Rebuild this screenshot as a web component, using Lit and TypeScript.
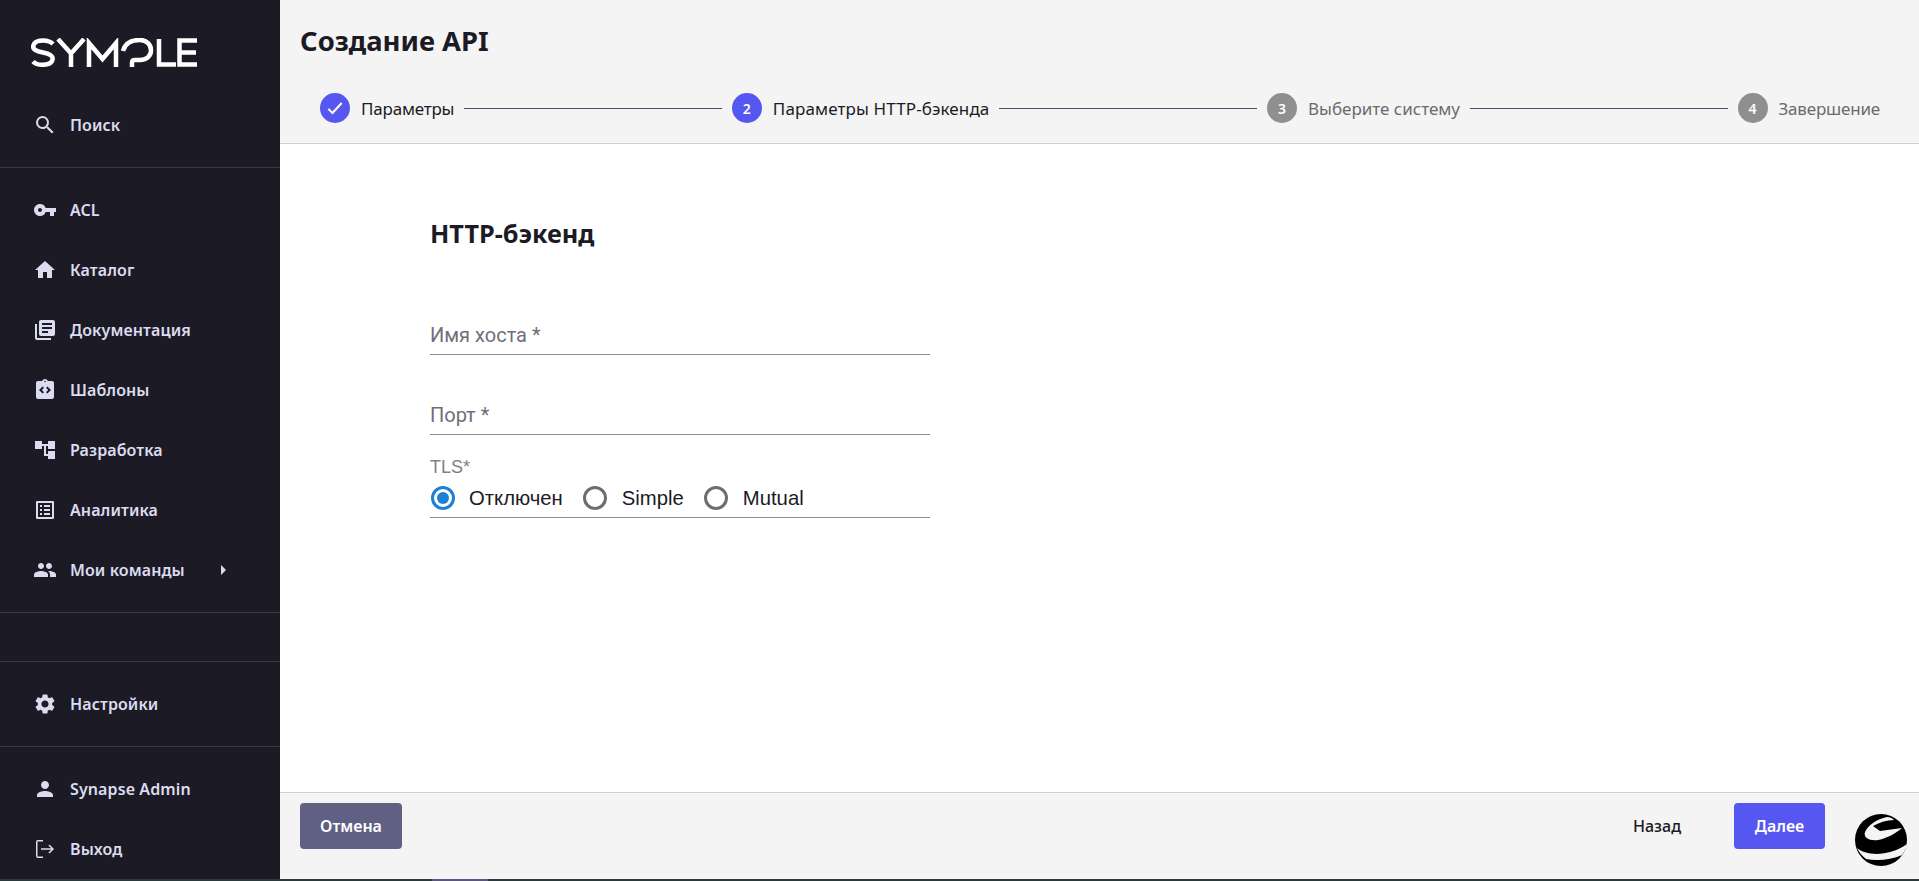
import { LitElement, html, css, svg } from "lit";
import { customElement } from "lit/decorators.js";

const icons: Record<string, any> = {
  search: svg`<path d="M15.5 14h-.79l-.28-.27A6.47 6.47 0 0 0 16 9.5 6.5 6.5 0 1 0 9.5 16c1.61 0 3.09-.59 4.23-1.57l.27.28v.79l5 4.99L20.49 19l-4.99-5zm-6 0C7.01 14 5 11.99 5 9.5S7.01 5 9.5 5 14 7.01 14 9.5 11.99 14 9.5 14z"/>`,
  key: svg`<path d="M12.65 10A6 6 0 0 0 7 6c-3.31 0-6 2.69-6 6s2.69 6 6 6a6 6 0 0 0 5.65-4H17v4h4v-4h2v-4H12.65zM7 14c-1.1 0-2-.9-2-2s.9-2 2-2 2 .9 2 2-.9 2-2 2z"/>`,
  home: svg`<path d="M10 20v-6h4v6h5v-8h3L12 3 2 12h3v8z"/>`,
  docs: svg`<path d="M4 6H2v14c0 1.1.9 2 2 2h14v-2H4V6zm16-4H8c-1.1 0-2 .9-2 2v12c0 1.1.9 2 2 2h12c1.1 0 2-.9 2-2V4c0-1.1-.9-2-2-2zm-1 9H9V9h10v2zm-4 4H9v-2h6v2zm4-8H9V5h10v2z"/>`,
  tpl: svg`<path fill-rule="evenodd" d="M19,3h-4.18C14.4,1.84,13.3,1,12,1S9.6,1.84,9.18,3H5c-1.1,0-2,.9-2,2v14c0,1.1.9,2,2,2h14c1.1,0,2-.9,2-2V5C21,3.9,20.1,3,19,3z M11,14.17l-1.41,1.42L6,12l3.59-3.59L11,9.83L8.83,12L11,14.17z M12,4.25c-.41,0-.75-.34-.75-.75S11.59,2.75,12,2.75s.75.34.75.75S12.41,4.25,12,4.25z M14.41,15.59L13,14.17L15.17,12L13,9.83l1.41-1.42L18,12L14.41,15.59z"/>`,
  dev: svg`<path d="M22 11V3h-7v3H9V3H2v8h7V8h2v10h4v3h7v-8h-7v3h-2V8h2v3z"/>`,
  list: svg`<path d="M19 5v14H5V5h14m1.1-2H3.9c-.5 0-.9.4-.9.9v16.2c0 .4.4.9.9.9h16.2c.4 0 .9-.5.9-.9V3.9c0-.5-.5-.9-.9-.9zM11 7h6v2h-6V7zm0 4h6v2h-6v-2zm0 4h6v2h-6v-2zM7 7h2v2H7V7zm0 4h2v2H7v-2zm0 4h2v2H7v-2z"/>`,
  group: svg`<path d="M16 11c1.66 0 2.99-1.34 2.99-3S17.66 5 16 5c-1.66 0-3 1.34-3 3s1.34 3 3 3zm-8 0c1.66 0 2.99-1.34 2.99-3S9.66 5 8 5C6.34 5 5 6.34 5 8s1.34 3 3 3zm0 2c-2.33 0-7 1.17-7 3.5V19h14v-2.5c0-2.33-4.67-3.5-7-3.5zm8 0c-.29 0-.62.02-.97.05 1.16.84 1.97 1.97 1.97 3.45V19h6v-2.5c0-2.33-4.67-3.5-7-3.5z"/>`,
  gear: svg`<path d="M19.14 12.94c.04-.3.06-.61.06-.94 0-.32-.02-.64-.07-.94l2.03-1.58a.49.49 0 0 0 .12-.61l-1.92-3.32a.488.488 0 0 0-.59-.22l-2.39.96c-.5-.38-1.03-.7-1.62-.94l-.36-2.54a.484.484 0 0 0-.48-.41h-3.84c-.24 0-.43.17-.47.41l-.36 2.54c-.59.24-1.13.57-1.62.94l-2.39-.96c-.22-.08-.47 0-.59.22L2.74 8.87c-.12.21-.08.47.12.61l2.03 1.58c-.05.3-.09.63-.09.94s.02.64.07.94l-2.03 1.58a.49.49 0 0 0-.12.61l1.92 3.32c.12.22.37.29.59.22l2.39-.96c.5.38 1.03.7 1.62.94l.36 2.54c.05.24.24.41.48.41h3.84c.24 0 .44-.17.47-.41l.36-2.54c.59-.24 1.13-.56 1.62-.94l2.39.96c.22.08.47 0 .59-.22l1.92-3.32c.12-.22.07-.47-.12-.61l-2.01-1.58zM12 15.6c-1.98 0-3.6-1.62-3.6-3.6s1.62-3.6 3.6-3.6 3.6 1.62 3.6 3.6-1.62 3.6-3.6 3.6z"/>`,
  person: svg`<path d="M12 12c2.21 0 4-1.79 4-4s-1.79-4-4-4-4 1.79-4 4 1.79 4 4 4zm0 2c-2.67 0-8 1.34-8 4v2h16v-2c0-2.66-5.33-4-8-4z"/>`,
  exit: svg`<path d="M10 3H5a2 2 0 0 0-2 2v14a2 2 0 0 0 2 2h5v-1.500H5a.5.5 0 0 1-.5-.5V5a.5.5 0 0 1 .5-.5h5V3zm6.500 4.500-1.060 1.060 2.690 2.690H8v1.500h10.130l-2.690 2.690 1.060 1.060L21 12l-4.500-4.500z"/>`,
};

const ic = (n: string) => html`<svg class="ic" viewBox="0 0 24 24" aria-hidden="true">${icons[n]}</svg>`;

@customElement("app-root")
export class AppRoot extends LitElement {
  static styles = css`
    :host { display: block; height: 881px; font-family: "Noto Sans", sans-serif; overflow: hidden; background: #2b3a3a; }
    .page { display: flex; height: 879px; }
    .strip { height: 2px; display: flex; }
    .strip i { display: block; width: 56px; margin-left: 432px; background: #5a5680; }
    .side { width: 280px; flex: none; background: #1c1b25; color: #dcdcf0; display: flex; flex-direction: column; }
    .logo { height: 95px; flex: none; padding: 38px 0 0 31px; box-sizing: border-box; }
    .logo svg { display: block; }
    .group { border-bottom: 1px solid #3a3a38; }
    .item { height: 60px; display: flex; align-items: center; padding-left: 33px; font-size: 16px; font-weight: 600; letter-spacing: 0.1px; position: relative; }
    .ic { width: 24px; height: 24px; fill: #dcdcf0; flex: none; margin-right: 13px; }
    .top { padding-bottom: 12px; }
    .nav { padding: 12px 0; }
    .caret { position: absolute; left: 221px; top: 25px; width: 0; height: 0; border-left: 5px solid #dcdcf0; border-top: 5px solid transparent; border-bottom: 5px solid transparent; }
    .spacer { height: 48px; flex: none; }
    .settings { border-top: 1px solid #3a3a38; padding: 12px 0; }
    .bottom { padding: 12px 0 0; }
    .main { flex: 1; min-width: 0; display: flex; flex-direction: column; }
    header { height: 144px; flex: none; box-sizing: border-box; background: #f4f4f4; border-bottom: 1px solid #cfcfcf; padding: 21px 39px 0 20px; }
    h1 { margin: 0; font-size: 27.4px; line-height: 40px; font-weight: 700; color: #1c1b25; }
    .steps { display: flex; align-items: center; margin: 32px 0 0 20px; height: 30px; }
    .step { display: flex; align-items: center; font-size: 17px; color: #1c1b25; white-space: nowrap; flex: none; }
    .step.off { color: #6b6b6b; }
    .step.tight { letter-spacing: -0.2px; }
    .step.wide { letter-spacing: 0.12px; }
    .num { width: 30px; height: 30px; border-radius: 50%; background: #5656f0; color: #fff; font-size: 14px; font-weight: 600; letter-spacing: 0; display: flex; align-items: center; justify-content: center; margin-right: 11px; }
    .off .num { background: #8f8f8f; }
    .num svg { width: 20px; height: 20px; fill: none; stroke: #fff; stroke-width: 2.4; }
    .line { flex: 1; height: 1px; background: #4e4c66; margin: 0 10px; }
    .content { flex: 1; background: #fff; padding: 0 150px; }
    h2 { margin: 0; padding-top: 72px; font-size: 25.3px; line-height: 34px; font-weight: 700; color: #1c1b25; }
    .field { width: 500px; height: 48px; box-sizing: border-box; border-bottom: 1px solid #8e8e93; font-family: Roboto, sans-serif; font-size: 20px; color: #6f6f78; padding: 15px 0 5px; line-height: 26px; }
    .f1 { margin-top: 57px; }
    .f2 { margin-top: 32px; }
    .tls { width: 500px; height: 61px; box-sizing: border-box; border-bottom: 1px solid #8e8e93; margin-top: 22px; font-family: "Liberation Sans", Arial, sans-serif; }
    .tls-label { font-size: 18px; line-height: 20px; color: #808086; }
    .radios { display: flex; align-items: center; margin-top: 6px; font-size: 20.3px; line-height: 30px; color: #1c1b25; }
    .radio { width: 24px; height: 24px; box-sizing: border-box; border: 3px solid #6d6d73; border-radius: 50%; margin-right: 15px; flex: none; display: flex; align-items: center; justify-content: center; }
    .radio.on { border-color: #1e7fd6; margin-left: 1px; margin-right: 14px; }
    .radio.on::after { content: ""; width: 12px; height: 12px; border-radius: 50%; background: #1e7fd6; }
    .radios span.t { margin-right: 20px; }
    footer { height: 87px; flex: none; box-sizing: border-box; background: #f4f4f4; border-top: 1px solid #cfcfcf; display: flex; align-items: flex-start; padding: 10px 0 0 20px; position: relative; }
    .btn { height: 46px; box-sizing: border-box; border-radius: 4px; display: flex; align-items: center; justify-content: center; font-size: 16px; font-weight: 600; }
    .cancel { width: 102px; background: #605f84; color: #fff; }
    .back { margin-left: auto; color: #1c1b25; font-size: 16px; font-weight: 500; width: 154px; }
    .next { width: 91px; background: #5656f0; color: #fff; margin-right: 94px; }
    .mark { position: absolute; right: 12px; top: 21px; width: 52px; height: 52px; }
  `;

  render() {
    return html`<div class="page">
      <aside class="side">
        <div class="logo">
          <svg width="166" height="29" viewBox="0 0 166 29" fill="none" stroke="#fff" stroke-width="4.500">
            <path d="M22 6C18 1.500 6 1 3 6c-3 5.500 3 7.500 9 8.500 6 1 11.500 3.500 9 8.500-3 5-15 5-19 .5"/>
            <path d="M27 1l13 14.500L53 1M40 15.500V29"/>
            <path d="M58 29V5l13.500 16L85 5v24"/>
            <path d="M92 13C94 5 101 2 109 2c7 0 11 5 11 10.500 0 6-5 9.500-11 9.500-5 0-8-1-8 3v4"/>
            <path d="M128 1v25.500h17"/>
            <path d="M166 2.500h-17.500v24H166M148.500 14.500H165"/>
          </svg>
        </div>
        <div class="group top"><div class="item">${ic("search")}Поиск</div></div>
        <div class="group nav">
          <div class="item">${ic("key")}ACL</div>
          <div class="item">${ic("home")}Каталог</div>
          <div class="item">${ic("docs")}Документация</div>
          <div class="item">${ic("tpl")}Шаблоны</div>
          <div class="item">${ic("dev")}Разработка</div>
          <div class="item">${ic("list")}Аналитика</div>
          <div class="item">${ic("group")}Мои команды<i class="caret"></i></div>
        </div>
        <div class="spacer"></div>
        <div class="group settings"><div class="item">${ic("gear")}Настройки</div></div>
        <div class="bottom">
          <div class="item">${ic("person")}Synapse Admin</div>
          <div class="item">${ic("exit")}Выход</div>
        </div>
      </aside>
      <main class="main">
        <header>
          <h1>Создание API</h1>
          <div class="steps">
            <div class="step tight"><span class="num"><svg viewBox="0 0 24 24"><path d="M4 13l5 5L20 6"/></svg></span>Параметры</div>
            <div class="line"></div>
            <div class="step wide"><span class="num">2</span>Параметры HTTP-бэкенда</div>
            <div class="line"></div>
            <div class="step off"><span class="num">3</span>Выберите систему</div>
            <div class="line"></div>
            <div class="step off tight"><span class="num">4</span>Завершение</div>
          </div>
        </header>
        <section class="content">
          <h2>HTTP-бэкенд</h2>
          <div class="field f1">Имя хоста *</div>
          <div class="field f2">Порт *</div>
          <div class="tls">
            <div class="tls-label">TLS*</div>
            <div class="radios">
              <i class="radio on"></i><span class="t">Отключен</span>
              <i class="radio"></i><span class="t">Simple</span>
              <i class="radio"></i><span class="t">Mutual</span>
            </div>
          </div>
        </section>
        <footer>
          <div class="btn cancel">Отмена</div>
          <div class="btn back">Назад</div>
          <div class="btn next">Далее</div>
          <svg class="mark" viewBox="0 0 52 52">
            <circle cx="26" cy="26" r="26" fill="#000"/>
            <path d="M32 3C22 5 13 11 10 18c-2 6 5 9 13 8 7-1 17-6 24-12L25 17l-7-5c7-4 14-6 21-6-2-2-4-3-7-3z" fill="#f4f4f4"/>
            <path d="M2 34c9 8 32 9 50-4-1 5-3 8-5 11-11 5-25 6-36 4-4-3-7-7-9-11z" fill="#f4f4f4"/>
          </svg>
        </footer>
      </main>
    </div>
    <div class="strip"><i></i></div>`;
  }
}
